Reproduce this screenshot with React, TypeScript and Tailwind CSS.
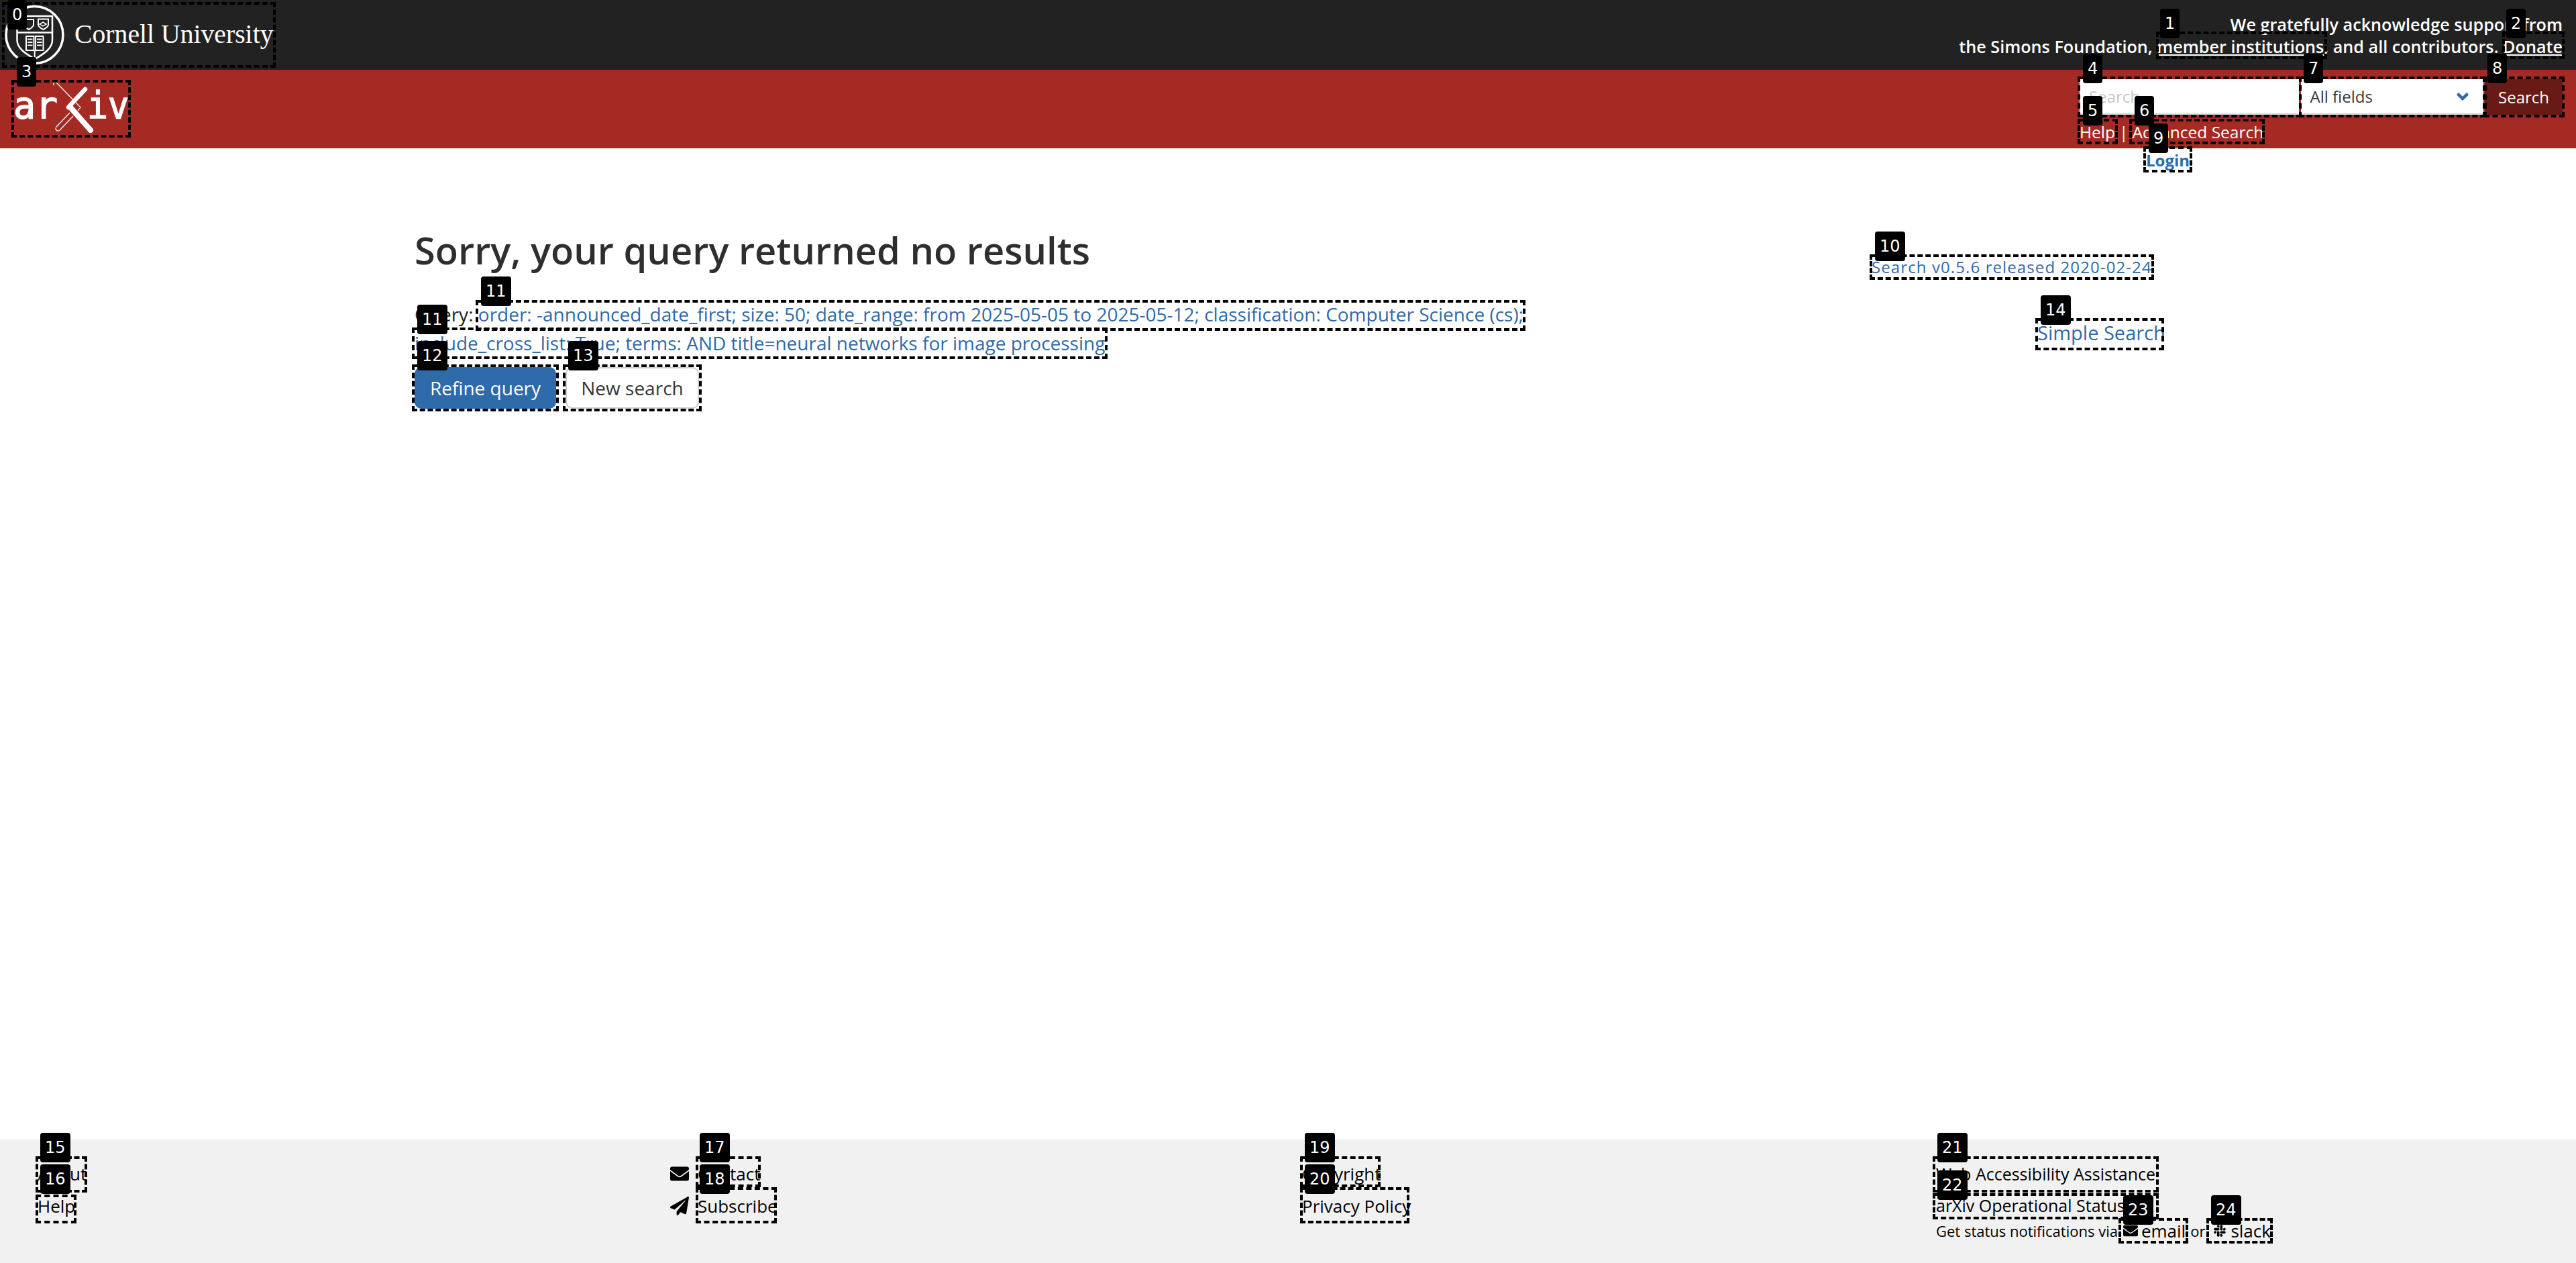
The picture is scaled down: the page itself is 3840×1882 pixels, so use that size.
import React from 'react';
import { FaChevronDown, FaEnvelope, FaPaperPlane, FaSlack } from 'react-icons/fa';

const boxes = [
    'left-[3px] top-[3px] w-[408px] h-[98px]',
    'left-[3214px] top-[47px] w-[255px] h-[41px]',
    'left-[3730px] top-[47px] w-[93px] h-[41px]',
    'left-[17px] top-[119px] w-[178px] h-[86px]',
    'left-[3097px] top-[114px] w-[334px] h-[61px]',
    'left-[3097px] top-[177px] w-[60px] h-[38px]',
    'left-[3174px] top-[177px] w-[202px] h-[38px]',
    'left-[3427px] top-[114px] w-[278px] h-[61px]',
    'left-[3703px] top-[114px] w-[120px] h-[61px]',
    'left-[3195px] top-[218px] w-[73px] h-[39px]',
    'left-[2787px] top-[379px] w-[424px] h-[38px]',
    'left-[709px] top-[447px] w-[1565px] h-[46px]',
    'left-[614px] top-[488px] w-[1037px] h-[47px]',
    'left-[614px] top-[543px] w-[219px] h-[70px]',
    'left-[839px] top-[543px] w-[207px] h-[70px]',
    'left-[3034px] top-[474px] w-[192px] h-[48px]',
    'left-[53px] top-[1723px] w-[77px] h-[54px]',
    'left-[53px] top-[1780px] w-[61px] h-[43px]',
    'left-[1037px] top-[1723px] w-[97px] h-[46px]',
    'left-[1037px] top-[1769px] w-[121px] h-[54px]',
    'left-[1938px] top-[1723px] w-[120px] h-[46px]',
    'left-[1938px] top-[1769px] w-[163px] h-[54px]',
    'left-[2881px] top-[1723px] w-[337px] h-[54px]',
    'left-[2881px] top-[1778px] w-[337px] h-[39px]',
    'left-[3158px] top-[1815px] w-[104px] h-[38px]',
    'left-[3289px] top-[1815px] w-[99px] h-[38px]',
];

const badges = [
    { n: 0, pos: 'left-[11px] top-0' },
    { n: 1, pos: 'left-[3220px] top-[13px]' },
    { n: 2, pos: 'left-[3736px] top-[13px]' },
    { n: 3, pos: 'left-[25px] top-[85px]' },
    { n: 4, pos: 'left-[3105px] top-[80px]' },
    { n: 5, pos: 'left-[3105px] top-[143px]' },
    { n: 6, pos: 'left-[3182px] top-[143px]' },
    { n: 7, pos: 'left-[3434px] top-[80px]' },
    { n: 8, pos: 'left-[3708px] top-[80px]' },
    { n: 9, pos: 'left-[3203px] top-[184px]' },
    { n: 10, pos: 'left-[2795px] top-[345px]' },
    { n: 11, pos: 'left-[717px] top-[412px]' },
    { n: 11, pos: 'left-[622px] top-[454px]' },
    { n: 12, pos: 'left-[622px] top-[508px]' },
    { n: 13, pos: 'left-[847px] top-[508px]' },
    { n: 14, pos: 'left-[3042px] top-[440px]' },
    { n: 15, pos: 'left-[60px] top-[1688px]' },
    { n: 16, pos: 'left-[60px] top-[1735px]' },
    { n: 17, pos: 'left-[1043px] top-[1688px]' },
    { n: 18, pos: 'left-[1043px] top-[1735px]' },
    { n: 19, pos: 'left-[1945px] top-[1688px]' },
    { n: 20, pos: 'left-[1945px] top-[1735px]' },
    { n: 21, pos: 'left-[2888px] top-[1688px]' },
    { n: 22, pos: 'left-[2888px] top-[1744px]' },
    { n: 23, pos: 'left-[3165px] top-[1781px]' },
    { n: 24, pos: 'left-[3296px] top-[1781px]' },
];

const CornellSeal = () => (
    <svg width="104" height="104" viewBox="0 0 104 104" fill="none" stroke="white" className="shrink-0">
        <circle cx="51.5" cy="52" r="42.5" strokeWidth="3.5" />
        <path d="M25.5 24H78V60C78 72 66 80 52 88C38 80 25.5 72 25.5 60Z" strokeWidth="2.5" />
        <path d="M26 48.5H77" strokeWidth="2.5" />
        <path d="M36 29H50V37C50 40 46 42 43 44C40 42 36 40 36 37ZM57 28.5H72V37C72 40 68 42 64.5 44C61 42 57 40 57 37Z" strokeWidth="2" />
        <path d="M64 33L69 36L64 39L59 36Z" strokeWidth="1.5" />
        <path d="M39 54H50.5V75H39ZM53 54H64.5V75H53Z" strokeWidth="2" />
        <path d="M41 58.5H48.5M41 63H48.5M41 67.5H48.5M55 58.5H62.5M55 63H62.5M55 67.5H62.5M51.7 75V87" strokeWidth="2" />
    </svg>
);

const ArxivLogo = () => (
    <svg width="178" height="86" viewBox="0 0 178 86" className="shrink-0 overflow-visible">
        <text x="3" y="57" fill="white" stroke="white" strokeWidth="1.5" fontFamily="'DejaVu Sans Mono', monospace" fontSize="56" textLength="66" lengthAdjust="spacingAndGlyphs">ar</text>
        <text x="113" y="57" fill="white" stroke="white" strokeWidth="1.5" fontFamily="'DejaVu Sans Mono', monospace" fontSize="56" textLength="62" lengthAdjust="spacingAndGlyphs">iv</text>
        <path d="M110 14L92 33L85 41" fill="none" stroke="white" strokeWidth="6.5" strokeLinecap="round" />
        <path d="M88 41L118 75" fill="none" stroke="white" strokeWidth="8" strokeLinecap="round" />
        <path d="M63 8Q62 5 64 4Q66 3 68 5L103 41L99 46M92 54L72 75Q69 77 67 75Q65 73 67 70L87 49" fill="none" stroke="white" strokeWidth="1.2" />
    </svg>
);

const Overlays = () => (
    <>
        {boxes.map(pos => (
            <div key={pos} className={`absolute border-4 border-dashed border-black pointer-events-none ${pos}`} />
        ))}
        {badges.map(b => (
            <div key={b.pos} className={`absolute h-[44px] px-[7px] bg-black text-white rounded text-[24px] leading-[44px] font-['DejaVu_Sans'] ${b.pos}`}>{b.n}</div>
        ))}
    </>
);

export default function App() {
    return (
        <div className="relative flex flex-col h-[1882px] overflow-hidden bg-white text-[#222] font-['Open_Sans',sans-serif]">
            {/* top banner */}
            <div className="flex justify-between h-[104px] bg-[#222222] text-white">
                <div className="flex items-center">
                    <CornellSeal />
                    <span className="ml-[7px] font-['Liberation_Serif',serif] text-[39.7px]">Cornell University</span>
                </div>
                <div className="pt-[20px] pr-[20px] text-right text-[25.2px] leading-[33px] font-semibold">
                    <p>We gratefully acknowledge support from</p>
                    <p>the Simons Foundation, <a className="underline">member institutions</a>, and all contributors. <a className="underline">Donate</a></p>
                </div>
            </div>

            {/* red header */}
            <div className="flex justify-between h-[117px] bg-[#a52a24]">
                <div className="pl-[17px] pt-[15px]"><ArxivLogo /></div>
                <div className="pr-[20px] pt-[14px] w-[740px]">
                    <div className="flex h-[53px] text-[24px]">
                        <input placeholder="Search..." className="w-[327px] pl-[14px] bg-white border-b-2 border-[#d5d5d5] shadow-inner placeholder:text-[#c8c8c8] outline-none" />
                        <div className="flex items-center justify-between w-[273px] ml-[3px] pl-[14px] pr-[22px] bg-white border-b-2 border-[#d5d5d5] text-[#363636]">
                            All fields
                            <FaChevronDown size={18} stroke="currentColor" strokeWidth={50} className="text-[#2f6aaa]" />
                        </div>
                        <button className="w-[116px] ml-[2px] bg-[#681a16] text-white">Search</button>
                    </div>
                    <div className="flex pt-[9px] text-[24.5px] font-medium text-white leading-[34px]">
                        <a>Help</a><span className="mx-[6px] font-normal">|</span><a>Advanced Search</a>
                    </div>
                </div>
            </div>

            {/* login */}
            <div className="h-[40px] pl-[3199px] text-[24px] font-bold text-[#2f6aaa] leading-[36px]">Login</div>

            {/* main content */}
            <div className="flex-1 flex pl-[618px]">
                <div className="w-[2172px] pt-[75px]">
                    <h1 className="text-[56px] font-semibold leading-[72px] text-[#2e2e2e]">Sorry, your query returned no results</h1>
                    <p className="mt-[39px] w-[1700px] text-[28px] leading-[43px]">
                        Query: <a className="text-[#2f6aaa]">order: -announced_date_first; size: 50; date_range: from 2025-05-05 to 2025-05-12; classification: Computer Science (cs); include_cross_list: True; terms: AND title=neural networks for image processing</a>
                    </p>
                    <div className="flex gap-[14px] mt-[14px] text-[28px]">
                        <button className="w-[211px] h-[62px] rounded-[10px] bg-[#2f6aaa] text-white">Refine query</button>
                        <button className="w-[199px] h-[62px] rounded-[10px] border-2 border-[#ccc] bg-white text-[#363636]">New search</button>
                    </div>
                </div>
                <div className="pt-[121px] text-[#2f6aaa]">
                    <p className="text-[24px] leading-[32px] tracking-[1.1px]">Search v0.5.6 released 2020-02-24</p>
                    <p className="mt-[64px] ml-[247px] text-[29px] leading-[36px]">Simple Search</p>
                </div>
            </div>

            {/* footer */}
            <div className="grid grid-cols-[944px_944px_944px_1fr] h-[184px] pl-[56px] pt-[27px] bg-[#f1f1f1] text-[26px] leading-[48px] text-black">
                <div>
                    <p>About</p>
                    <p>Help</p>
                </div>
                <div className="-ml-[1px]">
                    <p className="flex items-center gap-[13px]"><FaEnvelope size={28} />Contact</p>
                    <p className="flex items-center gap-[13px]"><FaPaperPlane size={28} />Subscribe</p>
                </div>
                <div className="-ml-[3px]">
                    <p>Copyright</p>
                    <p>Privacy Policy</p>
                </div>
                <div className="-ml-[2px]">
                    <p className="text-[25px]">Web Accessibility Assistance</p>
                    <p className="text-[25px] leading-[46px]">arXiv Operational Status</p>
                    <div className="flex items-center text-[22px] leading-[30px]">
                        <span>Get status notifications via</span>
                        <FaEnvelope size={22} className="ml-[8px]" />
                        <a className="ml-[5px] text-[26px]">email</a>
                        <span className="ml-[7px]">or</span>
                        <FaSlack size={20} className="ml-[12px]" />
                        <a className="ml-[6px] text-[26px]">slack</a>
                    </div>
                </div>
            </div>

            <Overlays />
        </div>
    );
}
